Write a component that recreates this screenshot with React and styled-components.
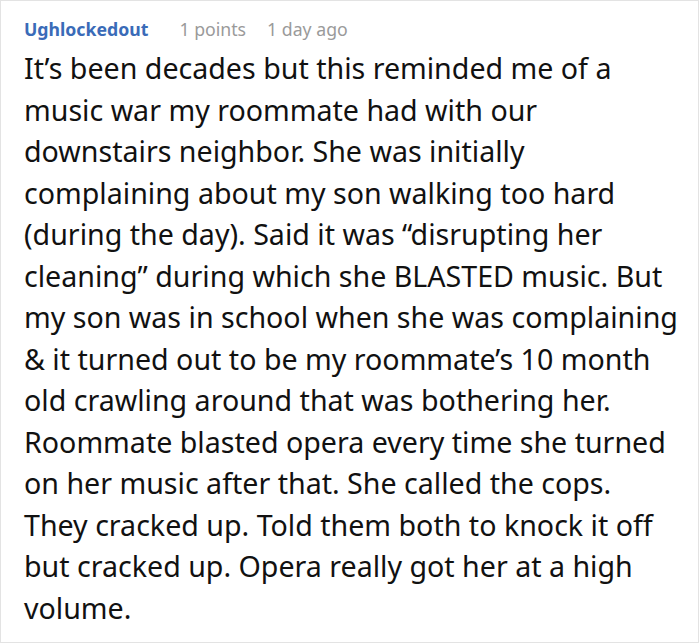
import styled, { createGlobalStyle } from "styled-components";

const Global = createGlobalStyle`
    body {
        margin: 0;
        background: #ffffff;
    }
`;

const Card = styled.div`
    box-sizing: border-box;
    width: 699px;
    height: 643px;
    border: 1px solid #e3e3e3;
    padding: 14px 16px 0 23px;
    font-family: "Noto Sans", "Open Sans", sans-serif;
    overflow: hidden;
`;

const Meta = styled.div`
    display: flex;
    align-items: baseline;
    gap: 21px;
    font-size: 17.7px;
    line-height: 28px;
    margin-bottom: 4px;
`;

const Author = styled.span`
    color: #3a6bb8;
    font-weight: 700;
    margin-right: 10px;
`;

const Detail = styled.span`
    color: #9a9a9a;
`;

const Body = styled.p`
    margin: 0;
    color: #111111;
    font-size: 28.6px;
    line-height: 41.5px;
`;

export default function App() {
    return (
        <>
            <Global />
            <Card>
                <Meta>
                    <Author>Ughlockedout</Author>
                    <Detail>1 points</Detail>
                    <Detail>1 day ago</Detail>
                </Meta>
                <Body>
                    It’s been decades but this reminded me of a music war my roommate had with our
                    downstairs neighbor. She was initially complaining about my son walking too hard
                    (during the day). Said it was “disrupting her cleaning” during which she BLASTED
                    music. But my son was in school when she was complaining &amp; it turned out to be
                    my roommate’s 10 month old crawling around that was bothering her. Roommate blasted
                    opera every time she turned on her music after that. She called the cops. They
                    cracked up. Told them both to knock it off but cracked up. Opera really got her at
                    a high volume.
                </Body>
            </Card>
        </>
    );
}
